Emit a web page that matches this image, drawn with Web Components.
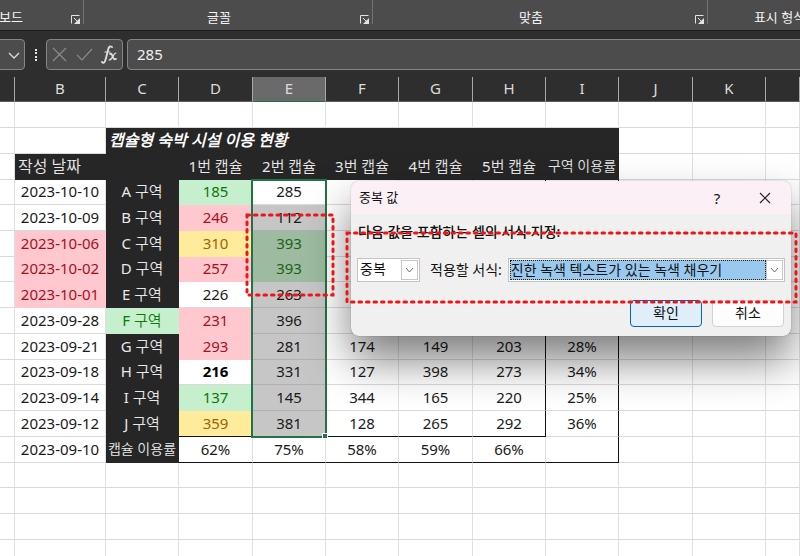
<!DOCTYPE html>
<html lang="ko">
<head>
<meta charset="utf-8">
<title>캡슐형 숙박 시설 이용 현황</title>
<style>
  html, body {
    margin: 0;
    min-height: 100%;
    background: #fff;
  }
</style>
</head>
<body>
<excel-window></excel-window>

<script>
class RibbonGroup extends HTMLElement {
  constructor() {
    super();
    this.attachShadow({ mode: "open" });
  }

  get styles() {
    return `
      :host {
        display: flex;
        align-items: center;
        box-sizing: border-box;
        height: 24px;
        padding-right: 3px;
        border-right: 1px solid #727272;
      }
      .label {
        flex: 1;
        padding-top: 10px;
        text-align: center;
        white-space: nowrap;
      }
      button {
        width: 9px;
        height: 9px;
        margin: 14px 0 0 6px;
        padding: 0;
        border: 0;
        background: none;
      }
      svg {
        display: block;
      }
    `;
  }

  connectedCallback() {
    this.shadowRoot.innerHTML = `
      <style>${this.styles}</style>
      <span class="label"><slot></slot></span>
      <button aria-label="옵션">
        <svg width="9" height="9" viewBox="0 0 9 9" fill="none" stroke="#e4e4e4">
          <path d="M.5 8.500V.5H8.500M3 3L7 7"/>
          <path d="M9 3V9H3Z" fill="#e4e4e4" stroke="none"/>
        </svg>
      </button>
    `;
  }
}

class RibbonBar extends HTMLElement {
  constructor() {
    super();
    this.attachShadow({ mode: "open" });
  }

  get styles() {
    return `
      :host {
        display: flex;
        height: 30px;
        overflow: hidden;
        background: #4c4c4c;
        border-bottom: 1px solid #1c1c1c;
        color: #f4f4f4;
        font-size: 13px;
        line-height: 20px;
      }
      ribbon-group { flex: none; }
      .clipboard { width: 151px; margin-left: -67px; }
      .font { width: 289px; }
      .align { width: 335px; }
      .number { width: 162px; }
    `;
  }

  connectedCallback() {
    this.shadowRoot.innerHTML = `
      <style>${this.styles}</style>
      <ribbon-group class="clipboard">클립보드</ribbon-group>
      <ribbon-group class="font">글꼴</ribbon-group>
      <ribbon-group class="align">맞춤</ribbon-group>
      <ribbon-group class="number">표시 형식</ribbon-group>
    `;
  }
}

class FormulaBar extends HTMLElement {
  constructor() {
    super();
    this.attachShadow({ mode: "open" });
  }

  get styles() {
    return `
      :host {
        display: flex;
        align-items: stretch;
        height: 31px;
        padding: 8px 0 7px;
        overflow: hidden;
        background: #2e2e2e;
      }
      .box {
        box-sizing: border-box;
        display: flex;
        align-items: center;
        background: #4c4c4c;
        border: 1px solid #858585;
        border-radius: 4px;
      }
      .name {
        width: 30px;
        margin-left: -5px;
        justify-content: flex-end;
      }
      .grip {
        width: 21px;
        display: flex;
        align-items: center;
        justify-content: center;
      }
      .tools {
        width: 77px;
        justify-content: space-between;
        padding: 0 4px 0 5px;
      }
      button {
        display: block;
        padding: 0;
        border: 0;
        background: none;
      }
      svg { display: block; }
      input {
        flex: 1;
        min-width: 0;
        box-sizing: border-box;
        margin: 0 -5px 0 4px;
        padding: 0 9px 2px;
        background: #4c4c4c;
        border: 1px solid #858585;
        border-radius: 4px;
        color: #f0f0f0;
        font: inherit;
        font-size: 15px;
      }
    `;
  }

  connectedCallback() {
    this.shadowRoot.innerHTML = `
      <style>${this.styles}</style>
      <div class="box name">
        <button aria-label="이름 상자">
          <svg width="20" height="20" viewBox="0 0 20 20" fill="none" stroke="#dcdcdc" stroke-width="1.300"><path d="M5 8L10 13L15 8"/></svg>
        </button>
      </div>
      <div class="grip">
        <svg width="4" height="14" viewBox="0 0 4 14" fill="#e4e4e4"><path d="M1 1h2v2H1zM1 4h2v2H1zM1 8h2v2H1zM1 11h2v2H1z"/></svg>
      </div>
      <div class="box tools">
        <button aria-label="취소">
          <svg width="15" height="15" viewBox="0 0 15 15" fill="none" stroke="#8a8a8a" stroke-width="1.200"><path d="M1 1L14 14M14 1L1 14"/></svg>
        </button>
        <button aria-label="입력">
          <svg width="17" height="15" viewBox="0 0 17 15" fill="none" stroke="#8a8a8a" stroke-width="1.200"><path d="M1 8L6 13L16 2"/></svg>
        </button>
        <button aria-label="함수 삽입">
          <svg width="17" height="20" viewBox="0 0 17 20" fill="none" stroke="#e0e0e0" stroke-linecap="round">
            <path d="M1 17C3 19 4 17 5 13L7 5C8 1 9 1 11 2" stroke-width="1.800"/>
            <path d="M4 7H9" stroke-width="1.200"/>
            <path d="M9 9C12 7 11 16 15 14" stroke-width="1.800"/>
            <path d="M15 8C12 8 12 15 8 15" stroke-width="1.200"/>
          </svg>
        </button>
      </div>
      <input type="text" value="285" aria-label="수식 입력줄">
    `;
  }
}

// cell = [text, classes, colspan]; column A is always blank
const ROWS = [
  [],
  [null, ["캡슐형 숙박 시설 이용 현황", "dark title", 7]],
  [["작성 날짜", "dark left"], ["", "dark"], ["1번 캡슐", "dark"], ["2번 캡슐", "dark"], ["3번 캡슐", "dark"],
    ["4번 캡슐", "dark"], ["5번 캡슐", "dark"], ["구역 이용률", "dark small"]],
  [["2023-10-10"], ["A 구역", "dark"], ["185", "good"], ["285"], [""], [""], ["", "edge"], ["", "edge"]],
  [["2023-10-09"], ["B 구역", "dark"], ["246", "bad"], ["112", "sel"], [""], [""], ["", "edge"], ["", "edge"]],
  [["2023-10-06", "bad"], ["C 구역", "dark"], ["310", "mid"], ["393", "hit"], [""], [""], ["", "edge"], ["", "edge"]],
  [["2023-10-02", "bad"], ["D 구역", "dark"], ["257", "bad"], ["393", "hit"], [""], [""], ["", "edge"], ["", "edge"]],
  [["2023-10-01", "bad"], ["E 구역", "dark"], ["226"], ["263", "sel"], [""], [""], ["", "edge"], ["", "edge"]],
  [["2023-09-28"], ["F 구역", "good"], ["231", "bad"], ["396", "sel"], [""], [""], ["", "edge"], ["", "edge"]],
  [["2023-09-21"], ["G 구역", "dark"], ["293", "bad"], ["281", "sel"], ["174"], ["149"], ["203", "edge"], ["28%", "edge"]],
  [["2023-09-18"], ["H 구역", "dark"], ["216", "bold"], ["331", "sel"], ["127"], ["398"], ["273", "edge"], ["34%", "edge"]],
  [["2023-09-14"], ["I 구역", "dark"], ["137", "good"], ["145", "sel"], ["344"], ["165"], ["220", "edge"], ["25%", "edge"]],
  [["2023-09-12"], ["J 구역", "dark"], ["359", "mid base"], ["381", "sel base"], ["128", "base"], ["265", "base"],
    ["292", "edge base"], ["36%", "edge"]],
  [["2023-09-10"], ["캡슐 이용률", "dark small"], ["62%", "base"], ["75%", "base"], ["58%", "base"], ["59%", "base"],
    ["66%", "base"], ["", "edge base"]],
  [], [], [], []
];

// every fourth row or so is a pixel shorter
const SHORT_ROWS = [3, 6, 10, 14];

class SheetGrid extends HTMLElement {
  constructor() {
    super();
    this.attachShadow({ mode: "open" });
  }

  get styles() {
    return `
      :host {
        display: block;
        background: #fff;
        color: #1a1a1a;
        font-family: "Noto Sans", "Noto Sans CJK KR DemiLight", "Noto Sans CJK KR Light", "Noto Sans CJK KR", sans-serif;
        font-size: 15px;
        line-height: 20px;
      }
      table {
        width: 100%;
        table-layout: fixed;
        border-collapse: separate;
        border-spacing: 0;
      }
      .a { width: 15px; }
      .b { width: 91px; }
      .n { width: 73px; }
      .w { width: 74px; }
      th, td {
        box-sizing: border-box;
        height: 26px;
        padding: 0 0 2px;
        overflow: hidden;
        text-align: center;
        white-space: nowrap;
      }
      .short td { height: 25px; }
      th {
        height: 25px;
        background: #2e2e2e;
        border-right: 1px solid #a8a8a8;
        border-bottom: 1px solid #5c5c5c;
        color: #dcdcdc;
        font-weight: 400;
      }
      th.active {
        background: #6a6a6a;
        border-bottom-color: #217346;
      }
      td {
        border-right: 1px solid #e0e0e0;
        border-bottom: 1px solid #dadada;
      }
      .dark {
        background: #262626;
        border-color: #262626;
        color: #e8e8e8;
      }
      .left, .title {
        padding-left: 3px;
        text-align: left;
        font-size: 16px;
      }
      .title {
        color: #fff;
        font-weight: 700;
        font-style: italic;
      }
      .small { font-size: 14px; }
      .bold { color: #000; font-weight: 700; }
      .good { background: #c6efce; border-color: #c6efce; color: #0a7a0a; }
      .bad { background: #ffc7ce; border-color: #ffc7ce; color: #a80f1c; }
      .mid { background: #ffeb9c; border-color: #ffeb9c; color: #9c6500; }
      .sel { background: #c6c6c6; border-bottom-color: #b0b0b0; }
      .hit { background: #9dbba0; border-color: #9dbba0; color: #1a611a; }
      .edge { border-right-color: #111; }
      .base { border-bottom-color: #111; }
    `;
  }

  cell(entry) {
    if (!entry) return "<td></td>";
    const [text, cls = "", span = 1] = entry;
    return `<td class="${cls}" colspan="${span}">${text}</td>`;
  }

  row(cells, index) {
    const used = cells.reduce((sum, c) => sum + ((c && c[2]) || 1), 0);
    const blanks = "<td></td>".repeat(11 - used);
    const cls = SHORT_ROWS.includes(index) ? "short" : "";
    return `<tr class="${cls}"><td></td>${cells.map(c => this.cell(c)).join("")}${blanks}</tr>`;
  }

  connectedCallback() {
    const heads = ["", ..."BCDEFGHIJK", ""]
      .map(h => `<th class="${h === "E" ? "active" : ""}">${h}</th>`).join("");
    const cols = ["a", "b", ..."nwnnwnnwn"].map(c => `<col class="${c}">`).join("");

    this.shadowRoot.innerHTML = `
      <style>${this.styles}</style>
      <table>
        <colgroup>${cols}<col></colgroup>
        <thead><tr>${heads}</tr></thead>
        <tbody>${ROWS.map((r, i) => this.row(r, i)).join("")}</tbody>
      </table>
    `;
  }
}

class SelectBox extends HTMLElement {
  constructor() {
    super();
    this.attachShadow({ mode: "open" });
  }

  get styles() {
    return `
      :host {
        display: flex;
        box-sizing: border-box;
        height: 24px;
        padding: 1px;
        background: #fff;
        border: 1px solid #c4c4c4;
      }
      select {
        appearance: none;
        flex: 1;
        min-width: 0;
        margin: 0;
        padding: 0 1px 2px;
        border: 0;
        border-radius: 0;
        background: none;
        color: #111;
        font: inherit;
        font-size: 14px;
        line-height: 18px;
      }
      :host([focused]) select {
        padding: 0 0 2px;
        background: #99c9ef;
        border: 1px dotted #222;
      }
      .arrow {
        box-sizing: border-box;
        width: 17px;
        display: flex;
        align-items: center;
        justify-content: center;
        border: 1px solid #c8c8c8;
      }
    `;
  }

  connectedCallback() {
    this.shadowRoot.innerHTML = `
      <style>${this.styles}</style>
      <select aria-label="${this.getAttribute("label")}"><option>${this.getAttribute("value")}</option></select>
      <span class="arrow">
        <svg width="9" height="6" viewBox="0 0 9 6" fill="none" stroke="#666"><path d="M1 1L4.500 5L8 1"/></svg>
      </span>
    `;
  }
}

class DuplicateDialog extends HTMLElement {
  constructor() {
    super();
    this.attachShadow({ mode: "open" });
  }

  get styles() {
    return `
      :host {
        display: block;
        box-sizing: border-box;
        width: 440px;
        background: #f0f0f0;
        border-radius: 8px;
        box-shadow:
          0 0 1px rgba(0, 0, 0, 0.5),
          0 24px 44px rgba(0, 0, 0, 0.5);
        color: #111;
        font-size: 14px;
        line-height: 20px;
      }
      header {
        display: flex;
        align-items: center;
        height: 33px;
        padding: 0 18px 0 8px;
        background: #faf0f5;
        border-radius: 8px 8px 0 0;
        font-size: 13px;
      }
      h2 {
        flex: 1;
        margin: 0;
        padding-bottom: 2px;
        font-size: 13px;
        font-weight: 400;
      }
      button {
        box-sizing: border-box;
        padding: 0;
        color: inherit;
        font: inherit;
      }
      header button {
        display: flex;
        align-items: center;
        justify-content: center;
        width: 16px;
        border: 0;
        background: none;
        font-size: 15px;
      }
      .close { margin-left: 32px; }
      .body { padding: 8px 6px 9px; }
      h3 {
        margin: 0 1px 16px;
        font-size: 14px;
        font-weight: 500;
      }
      .fields {
        display: flex;
        align-items: center;
      }
      .kind { width: 63px; }
      .fields span { margin: 0 6px 0 10px; }
      .format { flex: 1; }
      footer {
        display: flex;
        justify-content: flex-end;
        gap: 10px;
        margin: 18px 1px 0;
      }
      footer button {
        width: 72px;
        height: 27px;
        padding-bottom: 2px;
        background: #fdfdfd;
        border: 1px solid #d2d2d2;
        border-radius: 4px;
      }
      footer .ok {
        background: #e0eef9;
        border-color: #0067b8;
      }
    `;
  }

  connectedCallback() {
    this.shadowRoot.innerHTML = `
      <style>${this.styles}</style>
      <header>
        <h2>중복 값</h2>
        <button aria-label="도움말">?</button>
        <button class="close" aria-label="닫기">
          <svg width="12" height="12" viewBox="0 0 12 12" fill="none" stroke="#222" stroke-width="1.200"><path d="M1 1L11 11M11 1L1 11"/></svg>
        </button>
      </header>
      <div class="body">
        <h3>다음 값을 포함하는 셀의 서식 지정:</h3>
        <div class="fields">
          <select-box class="kind" label="값 종류" value="중복"></select-box>
          <span>적용할 서식:</span>
          <select-box class="format" focused label="적용할 서식" value="진한 녹색 텍스트가 있는 녹색 채우기"></select-box>
        </div>
        <footer>
          <button class="ok">확인</button>
          <button>취소</button>
        </footer>
      </div>
    `;
  }
}

// dotted red frame drawn on top of everything
class MarkBox extends HTMLElement {
  constructor() {
    super();
    this.attachShadow({ mode: "open" });
  }

  connectedCallback() {
    this.shadowRoot.innerHTML = `
      <style>
        :host { display: block; pointer-events: none; }
        svg { display: block; width: 100%; height: 100%; overflow: visible; }
      </style>
      <svg fill="none" stroke="#f01414" stroke-width="3" stroke-linecap="round" stroke-dasharray="2.500 5">
        <rect width="100%" height="100%"/>
      </svg>
    `;
  }
}

class ExcelWindow extends HTMLElement {
  constructor() {
    super();
    this.attachShadow({ mode: "open" });
  }

  get styles() {
    return `
      :host {
        display: block;
        position: relative;
        height: 100vh;
        overflow: hidden;
        font-family: "Noto Sans", "Noto Sans CJK KR", sans-serif;
      }
      .selection, duplicate-dialog, mark-box { position: absolute; }
      .selection {
        box-sizing: border-box;
        left: 251px;
        top: 179px;
        width: 76px;
        height: 259px;
        border: 2px solid #217346;
      }
      .selection::after {
        content: "";
        position: absolute;
        right: -3px;
        bottom: -3px;
        width: 4px;
        height: 4px;
        background: #217346;
        border: 1px solid #fff;
      }
      duplicate-dialog { left: 351px; top: 181px; }
      .cells { left: 247px; top: 215px; width: 86px; height: 80px; }
      .options { left: 347px; top: 233px; width: 449px; height: 69px; }
    `;
  }

  connectedCallback() {
    this.shadowRoot.innerHTML = `
      <style>${this.styles}</style>
      <ribbon-bar></ribbon-bar>
      <formula-bar></formula-bar>
      <sheet-grid></sheet-grid>
      <div class="selection"></div>
      <duplicate-dialog role="dialog"></duplicate-dialog>
      <mark-box class="cells"></mark-box>
      <mark-box class="options"></mark-box>
    `;
  }
}

customElements.define("ribbon-group", RibbonGroup);
customElements.define("ribbon-bar", RibbonBar);
customElements.define("formula-bar", FormulaBar);
customElements.define("sheet-grid", SheetGrid);
customElements.define("select-box", SelectBox);
customElements.define("duplicate-dialog", DuplicateDialog);
customElements.define("mark-box", MarkBox);
customElements.define("excel-window", ExcelWindow);
</script>
</body>
</html>
